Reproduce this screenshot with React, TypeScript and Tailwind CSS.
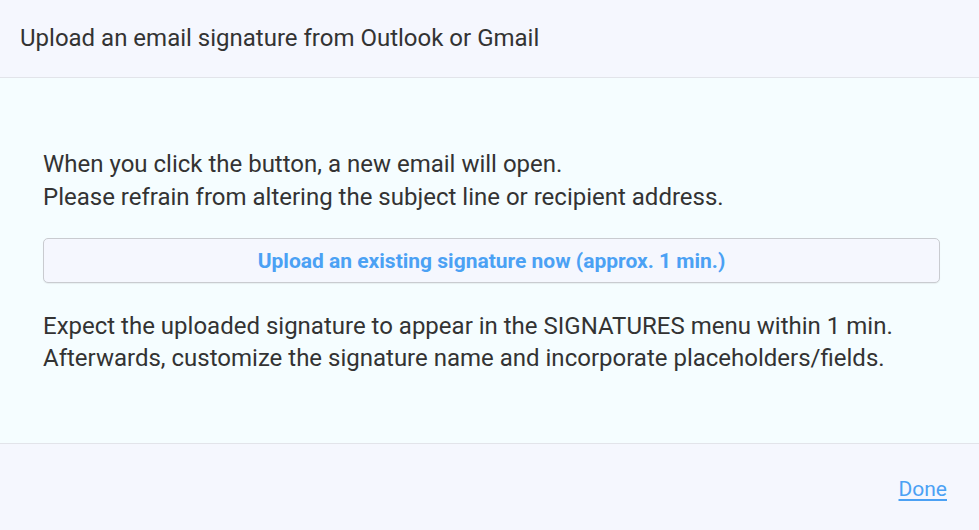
export default function App() {
  return (
    <div className="w-[979px] h-[530px] flex flex-col bg-[#f5f7fe] text-[#333333] font-['Roboto',sans-serif]">
      {/* Header */}
      <div className="h-[78px] flex items-center px-5 pb-[2px] border-b border-[#e2e4ea] bg-[#f5f7fe] shrink-0">
        <h2 className="text-[24px] leading-[30px] text-[#333333]">Upload an email signature from Outlook or Gmail</h2>
      </div>

      {/* Content */}
      <div className="h-[366px] shrink-0 bg-[#f5fdff] border-b border-[#e2e4ea] pt-[70px] px-[43px]">
        <p className="text-[24px] leading-[33px]">
          When you click the button, a new email will open.
          <br />
          Please refrain from altering the subject line or recipient address.
        </p>
        <button className="mt-[24px] w-[897px] h-[45px] pt-[3px] rounded-[5px] border border-[#c9cbd0] bg-[#f5f7fe] shadow-[0_1px_1px_rgba(0,0,0,0.06)] text-[21px] font-bold text-[#4ba1f4]">
          Upload an existing signature now (approx. 1 min.)
        </button>
        <p className="mt-[27px] text-[24px] leading-[32px]">
          Expect the uploaded signature to appear in the SIGNATURES menu within 1 min.
          <br />
          Afterwards, customize the signature name and incorporate placeholders/fields.
        </p>
      </div>

      {/* Footer */}
      <div className="flex-1 flex items-center justify-end pr-[32px] pt-[3px]">
        <a href="#" className="text-[21px] leading-[28px] text-[#4ba1f4] underline underline-offset-[3px]">
          Done
        </a>
      </div>
    </div>
  );
}
